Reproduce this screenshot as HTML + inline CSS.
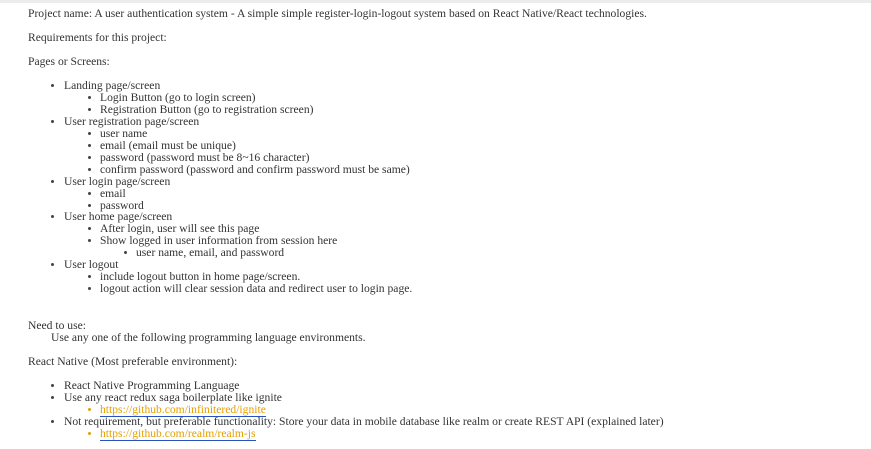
<!DOCTYPE html>
<html><head><meta charset="utf-8"><style>
body{margin:0;width:871px;height:449px;background:#fff;position:relative;overflow:hidden;font-family:"Liberation Serif","Times New Roman",serif;font-size:11.6px;color:#333;}
.top{position:absolute;left:0;top:0;width:871px;height:3px;background:#ececec;}
.l{position:absolute;line-height:12px;white-space:nowrap;padding-top:1px;}
.b{position:absolute;width:3px;height:3px;background:#444;border-radius:50%;margin-top:-1px;}
a{color:#e5a000;text-decoration:none;border-bottom:1px solid #2a52be;}
</style></head><body>
<div class="top"></div>
<div class="l" style="left:28px;top:7px">Project name: A user authentication system - A simple simple register-login-logout system based on React Native/React technologies.</div>
<div class="l" style="left:28px;top:31px">Requirements for this project:</div>
<div class="l" style="left:28px;top:55px">Pages or Screens:</div>

<div class="b" style="left:51px;top:85px"></div><div class="l" style="left:64px;top:79px">Landing page/screen</div>
<div class="b" style="left:88px;top:97px"></div><div class="l" style="left:100px;top:91px">Login Button (go to login screen)</div>
<div class="b" style="left:88px;top:109px"></div><div class="l" style="left:100px;top:103px">Registration Button (go to registration screen)</div>
<div class="b" style="left:51px;top:121px"></div><div class="l" style="left:64px;top:115px">User registration page/screen</div>
<div class="b" style="left:88px;top:133px"></div><div class="l" style="left:100px;top:127px">user name</div>
<div class="b" style="left:88px;top:145px"></div><div class="l" style="left:100px;top:139px">email (email must be unique)</div>
<div class="b" style="left:88px;top:157px"></div><div class="l" style="left:100px;top:151px">password (password must be 8~16 character)</div>
<div class="b" style="left:88px;top:169px"></div><div class="l" style="left:100px;top:163px">confirm password (password and confirm password must be same)</div>
<div class="b" style="left:51px;top:181px"></div><div class="l" style="left:64px;top:175px">User login page/screen</div>
<div class="b" style="left:88px;top:193px"></div><div class="l" style="left:100px;top:187px">email</div>
<div class="b" style="left:88px;top:205px"></div><div class="l" style="left:100px;top:199px">password</div>
<div class="b" style="left:51px;top:216px"></div><div class="l" style="left:64px;top:210px">User home page/screen</div>
<div class="b" style="left:88px;top:228px"></div><div class="l" style="left:100px;top:222px">After login, user will see this page</div>
<div class="b" style="left:88px;top:240px"></div><div class="l" style="left:100px;top:234px">Show logged in user information from session here</div>
<div class="b" style="left:124px;top:252px"></div><div class="l" style="left:136px;top:246px">user name, email, and password</div>
<div class="b" style="left:51px;top:264px"></div><div class="l" style="left:64px;top:258px">User logout</div>
<div class="b" style="left:88px;top:276px"></div><div class="l" style="left:100px;top:270px">include logout button in home page/screen.</div>
<div class="b" style="left:88px;top:288px"></div><div class="l" style="left:100px;top:282px">logout action will clear session data and redirect user to login page.</div>

<div class="l" style="left:28px;top:319px">Need to use:</div>
<div class="l" style="left:51px;top:331px">Use any one of the following programming language environments.</div>
<div class="l" style="left:28px;top:355px">React Native (Most preferable environment):</div>
<div class="b" style="left:51px;top:385px"></div><div class="l" style="left:64px;top:379px">React Native Programming Language</div>
<div class="b" style="left:51px;top:397px"></div><div class="l" style="left:64px;top:391px">Use any react redux saga boilerplate like ignite</div>
<div class="b" style="left:88px;top:409px;background:#e5a000"></div><div class="l" style="left:100px;top:403px"><a>https://github.com/infinitered/ignite</a></div>
<div class="b" style="left:51px;top:421px"></div><div class="l" style="left:64px;top:415px">Not requirement, but preferable functionality: Store your data in mobile database like realm or create REST API (explained later)</div>
<div class="b" style="left:88px;top:433px;background:#e5a000"></div><div class="l" style="left:100px;top:427px"><a>https://github.com/realm/realm-js</a></div>
</body></html>
